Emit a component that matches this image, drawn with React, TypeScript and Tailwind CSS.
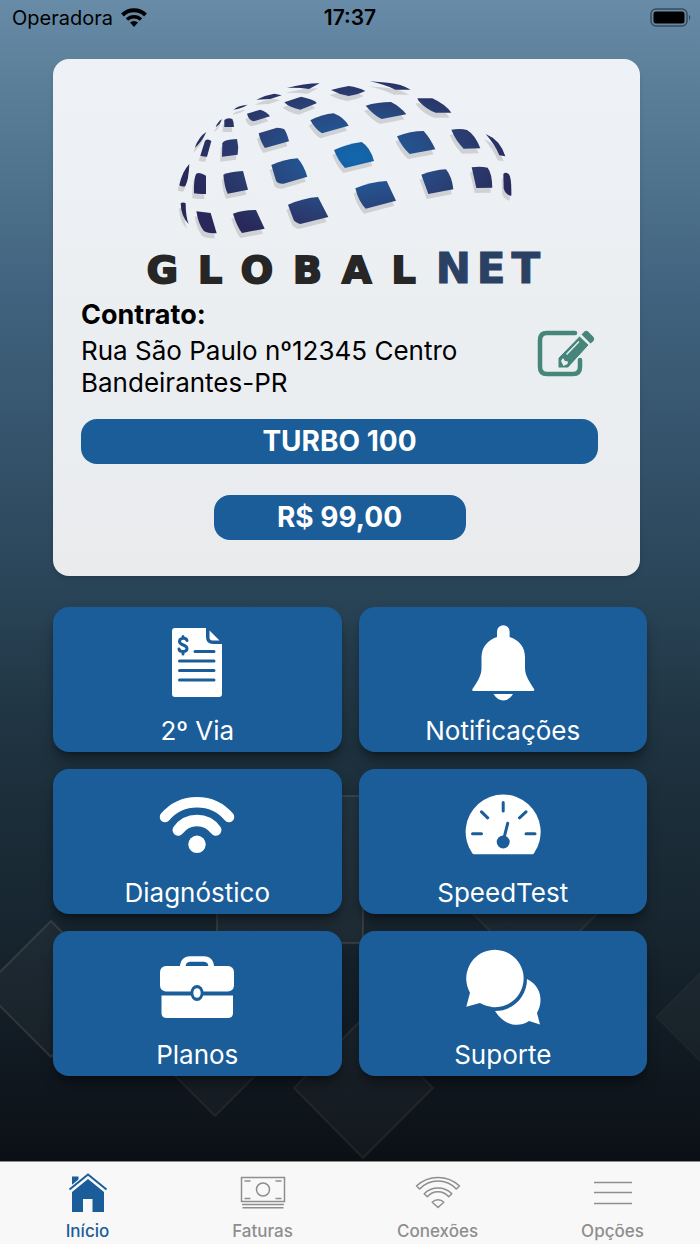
import React from 'react';

const globeTiles = [
  'M440 84 Q490 70 538 70 L506 87 Q470 82 440 84Z',
  'M348 119 Q375 105 402 101 L424 106 L390 117Z',
  'M280 149 Q290 137 322 134 L310 141 Q295 147 280 149Z',
  'M688 64 Q750 68 780 75 Q800 82 811 89 L765 89 Q730 72 688 64Z',
  'M572 90 Q600 82 625 78 Q655 82 675 93 Q655 103 625 108 Q598 104 572 90Z',
  'M432 127 L482 110 Q515 117 526 125 L529 130 L480 149 Q445 142 432 127Z',
  'M320 161 L360 149 Q380 155 389 169 L340 184 Q325 180 320 161Z',
  'M252 180 Q262 172 276 177 Q281 185 281 201 L252 201Z',
  'M226 202 Q232 185 245 178 L238 192Z',
  'M163 264 Q175 230 198 216 Q185 245 163 264Z',
  'M180 287 L194 242 Q203 234 213 243 L200 290 Q190 290 180 287Z',
  'M246 250 Q250 238 290 237 Q296 260 292 284 L245 290Z',
  'M355 220 L410 203 Q425 203 432 208 Q440 220 446 244 L374 264 Q360 245 355 220Z',
  'M510 181 Q545 163 580 160 Q610 172 625 197 L545 220 Q525 208 510 181Z',
  'M676 137 Q710 126 752 126 Q780 140 798 163 L724 177 Q700 165 676 137Z',
  'M831 115 L876 115 Q915 133 933 158 L886 158 Q860 150 835 123Z',
  'M581 270 Q620 252 664 246 Q690 262 701 303 L614 324 Q595 305 581 270Z',
  'M770 229 Q810 213 850 213 Q870 235 885 268 L808 282 Q785 262 770 229Z',
  'M933 209 Q960 204 980 210 Q1005 225 1020 265 L970 266 Q945 240 933 209Z',
  'M1036 222 Q1080 240 1095 289 L1077 286 Q1065 255 1036 222Z',
  'M393 315 Q430 298 472 295 Q490 315 501 350 L430 371 Q412 372 407 362Z',
  'M249 344 Q270 335 308 333 L323 389 L262 401 Q252 380 249 344Z',
  'M161 400 Q160 350 168 341 Q178 335 197 347 L197 402 Q175 403 161 400Z',
  'M117 376 Q125 335 147 312 Q145 360 135 378 Q128 382 117 376Z',
  'M121 430 Q128 425 136 430 Q136 470 145 492 Q122 470 121 430Z',
  'M168 454 L211 459 L229 520 Q200 520 190 512 Q175 495 168 454Z',
  'M278 461 Q310 449 347 450 L373 506 L305 519 Q290 500 278 461Z',
  'M443 434 Q490 414 533 411 L564 471 L480 492 Q465 488 460 480Z',
  'M645 385 Q690 365 739 363 L767 422 L676 446 Q655 425 645 385Z',
  'M843 344 Q880 330 917 328 Q935 350 939 388 L864 402Z',
  'M994 322 Q1020 318 1042 323 Q1055 340 1056 383 L1008 384Z',
  'M1089 342 Q1095 335 1105 342 Q1114 350 1113 407 Q1095 405 1090 385Z',
];

const Logo: React.FC = () => (
  <div className="flex flex-col items-center">
    <svg className="h-40 w-[340px]" viewBox="110 60 1020 480" aria-hidden="true">
      <defs>
        <radialGradient
          id="globe"
          gradientUnits="userSpaceOnUse"
          cx="0"
          cy="0"
          r="1"
          gradientTransform="translate(640 290) scale(500 270)"
        >
          <stop offset="0" stopColor="#1268ad" />
          <stop offset="0.15" stopColor="#165fa3" />
          <stop offset="0.4" stopColor="#264f8a" />
          <stop offset="0.7" stopColor="#2a3c70" />
          <stop offset="1" stopColor="#28295a" />
        </radialGradient>
      </defs>
      <g fill="#cfd1d4" transform="translate(-5 15)">
        {globeTiles.map((d) => (
          <path key={d} d={d} />
        ))}
      </g>
      <g fill="url(#globe)">
        {globeTiles.map((d) => (
          <path key={d} d={d} />
        ))}
      </g>
    </svg>
    <h1 className="mt-[5px] flex items-baseline font-['DejaVu_Sans',sans-serif] leading-[48px] font-bold">
      <span className="text-[38px] tracking-[20px] text-[#262626] [-webkit-text-stroke:2px_#262626]">
        GLOBAL
      </span>
      <span className="text-[42px] tracking-[6px] text-[#2b4163] [-webkit-text-stroke:1px_#2b4163]">
        NET
      </span>
    </h1>
  </div>
);

const InvoiceIcon: React.FC = () => (
  <svg className="size-[92px]" viewBox="0 0 92 92" aria-hidden="true">
    <path fill="currentColor" d="M24 12H55v9q0 7 7 7h9v50q0 3-3 3H24q-3 0-3-3V15q0-3 3-3z" />
    <path fill="currentColor" d="M58.500 14.500L68.500 24.500h-7q-3 0-3-3z" />
    <g fill="none" stroke="#1a5d99" strokeWidth="3" strokeLinecap="round">
      <path d="M44 35.500H63M28.500 45H63M28.500 54.500H63M28.500 64H63" />
      <path d="M36 24.500C35 21.500 28.500 21.500 28.500 25.500S36 28.500 36 32.500S28.500 36.500 28 33M32 20.500V22M32 36.500V38" />
    </g>
  </svg>
);

const BellIcon: React.FC = () => (
  <svg className="size-[92px]" viewBox="0 0 92 92" fill="currentColor" aria-hidden="true">
    <path d="M40 21V15.500a6.300 6.300 0 0 1 12.600 0V21C62 24 68 31 68 41V52C68 60 73 66 77 73Q78 75 76 75H16.500Q14.500 75 15.500 73C20 66 24.500 60 24.500 52V41C24.500 31 31 24 40 21Z" />
    <path d="M36.500 78H56Q52 84.500 46.300 84.500T36.500 78Z" />
  </svg>
);

const WifiIcon: React.FC = () => (
  <svg className="size-[92px]" viewBox="0 0 92 92" aria-hidden="true">
    <g fill="none" stroke="currentColor" strokeLinecap="round">
      <path strokeWidth="10.500" d="M14 39A42 42 0 0 1 78 39" />
      <path strokeWidth="11.500" d="M27.300 52A23 23 0 0 1 64.700 52" />
    </g>
    <circle cx="46" cy="66.300" r="8.700" fill="currentColor" />
  </svg>
);

const SpeedIcon: React.FC = () => (
  <svg className="size-[92px]" viewBox="0 0 92 92" aria-hidden="true">
    <path fill="currentColor" d="M17 76.300Q16 76.300 15.300 75.300A37.500 37.500 0 1 1 77 75.300Q76.400 76.300 75.500 76.300Z" />
    <g fill="none" stroke="#1a5d99" strokeWidth="3" strokeLinecap="round">
      <path d="M46.200 24.500V33M15.500 55.700H24.500M69 55.700H78M24.500 33.800L30.700 39.800M69 33.800L62.500 39.800" />
      <path d="M50.700 45.300L46.500 62" />
    </g>
    <circle cx="46.200" cy="64" r="6.500" fill="#1a5d99" />
  </svg>
);

const BriefcaseIcon: React.FC = () => (
  <svg className="size-[92px]" viewBox="0 0 92 92" aria-hidden="true">
    <path
      d="M31.500 28Q32 19 39 19H53Q60 19 60.500 28"
      fill="none"
      stroke="currentColor"
      strokeWidth="5.500"
    />
    <rect x="9" y="26" width="74" height="25.500" rx="6" fill="currentColor" />
    <path fill="currentColor" d="M10.500 55.500H82V73Q82 78 77 78H15.500Q10.500 78 10.500 73Z" />
    <ellipse cx="46" cy="53" rx="6.500" ry="8" fill="#1a5d99" />
    <ellipse cx="46" cy="53" rx="3.700" ry="4.800" fill="currentColor" />
  </svg>
);

const ChatIcon: React.FC = () => (
  <svg className="size-[92px]" viewBox="0 0 92 92" fill="currentColor" aria-hidden="true">
    <path d="M13 52.700A28.700 28.700 0 1 1 23 63L9.300 66.700Z" />
    <path d="M70 39C80 44 83.500 52 83.500 60C83.500 65 82 69 80 73L83 84.500L72 81C60 89 46 84 38 71C56 71 70 57 70 39Z" />
  </svg>
);

const EditIcon: React.FC = () => (
  <svg className="h-12 w-[60px]" viewBox="0 0 60 48" aria-hidden="true">
    <path
      d="M39 4H11Q4 4 4 11V38Q4 45 11 45H37Q44 45 44 38V31"
      fill="none"
      stroke="#45857a"
      strokeWidth="4.500"
      strokeLinecap="round"
    />
    <path d="M22 39V29L43.500 7L53 16L32 39Z" fill="#45857a" stroke="#ebeef1" strokeWidth="1" />
    <path d="M45.500 5.500L48.500 2.500Q50.500 1 52.500 3L57.500 8Q59 10 57.500 12L54.500 14.500Z" fill="#45857a" />
    <path d="M25 32L27 29L29 32L32 32.500L31.500 35L27.500 37Z" fill="#ebeef1" />
    <path d="M30.500 25.500L43 12.500" stroke="#ebeef1" strokeWidth="1.500" />
  </svg>
);

const HomeTabIcon: React.FC = () => (
  <svg className="h-11 w-12" viewBox="0 0 48 44" aria-hidden="true">
    <path fill="currentColor" d="M8 6.500H14.500V12L8 18Z" />
    <path fill="none" stroke="#f8f8f8" strokeWidth="5" d="M5 20.500L24 5L43 20.500" />
    <path fill="none" stroke="currentColor" strokeWidth="2" d="M5.500 19.500L24 4.500L42.500 19.500" />
    <path fill="currentColor" d="M24 9L40 22V42H28.500V29H19V42H8V22Z" />
  </svg>
);

const CashTabIcon: React.FC = () => (
  <svg
    className="h-11 w-12"
    viewBox="0 0 48 44"
    fill="none"
    stroke="currentColor"
    strokeWidth="1.500"
    aria-hidden="true"
  >
    <path d="M2.500 7.500H45.500V31.500H2.500Z" />
    <circle cx="24" cy="19.500" r="6.500" />
    <path d="M5.500 11H11.500M36.500 11H42.500M5.500 28.500H11.500M36.500 28.500H42.500M3 34.500H45M3.500 37.700H44.500" />
  </svg>
);

const WifiTabIcon: React.FC = () => (
  <svg
    className="h-11 w-12"
    viewBox="0 0 48 44"
    fill="none"
    stroke="currentColor"
    strokeWidth="1.500"
    strokeLinejoin="round"
    aria-hidden="true"
  >
    <path d="M2.500 16A31.400 31.400 0 0 1 45.500 16L42.300 19A25 25 0 0 0 5.700 19Z" />
    <path d="M10.200 23.700A19.500 19.500 0 0 1 37.800 23.700L34.700 26.700A14 14 0 0 0 13.300 26.700Z" />
    <path d="M18.200 32.300A8 8 0 0 1 29.800 32.300L24 37.500Z" />
  </svg>
);

const MenuTabIcon: React.FC = () => (
  <svg className="h-11 w-12" viewBox="0 0 48 44" stroke="currentColor" strokeWidth="1.500" aria-hidden="true">
    <path d="M5 12.500H43M5 22.500H43M5 33.500H43" />
  </svg>
);

const StatusBar: React.FC = () => (
  <header className="grid h-9 grid-cols-3 items-center px-3 text-[20px] leading-6 text-black">
    <div className="flex items-center gap-2">
      <span>Operadora</span>
      <svg className="h-5 w-[26px]" viewBox="0 0 26 20" aria-hidden="true">
        <g fill="none" stroke="currentColor" strokeWidth="4">
          <path d="M1.500 7A16.500 16.500 0 0 1 24.500 7" />
          <path d="M6 11.500A10 10 0 0 1 20 11.500" strokeWidth="3.500" />
        </g>
        <path fill="currentColor" d="M9 14.500A6 6 0 0 1 17 14.500L13 19Z" />
      </svg>
    </div>
    <span className="text-center text-[21px] font-semibold">17:37</span>
    <svg className="-mr-1 h-5 w-[42px] justify-self-end" viewBox="0 0 42 20" aria-hidden="true">
      <rect x="1" y="1" width="36" height="17" rx="5" fill="none" stroke="#000" strokeOpacity="0.450" strokeWidth="1.500" />
      <rect x="3.500" y="3.500" width="31" height="12" rx="2.500" />
      <path d="M39 6.500Q41.500 9.500 39 12.500Z" fillOpacity="0.500" />
    </svg>
  </header>
);

const Backdrop: React.FC = () => (
  <svg
    className="absolute inset-0 -z-10 h-full w-full"
    viewBox="0 0 700 1244"
    preserveAspectRatio="xMidYMax slice"
    fill="#ffffff"
    fillOpacity="0.030"
    stroke="#a08c82"
    strokeOpacity="0.200"
    strokeWidth="2"
    aria-hidden="true"
  >
    <path d="M217 796H363V943H217Z" />
    <path d="M51 921L-17 989L51 1057L119 989Z" />
    <path d="M535 852L597 914L535 976L473 914Z" strokeOpacity="0.120" />
    <path d="M215 1000L273 1058L215 1116L157 1058Z" strokeOpacity="0.120" />
    <path d="M363 1018L433 1088L363 1158L294 1088Z" strokeOpacity="0.120" />
    <path d="M728 945L800 1017L728 1089L656 1017Z" strokeOpacity="0.050" />
  </svg>
);

const services = [
  { label: '2º Via', icon: <InvoiceIcon /> },
  { label: 'Notificações', icon: <BellIcon /> },
  { label: 'Diagnóstico', icon: <WifiIcon /> },
  { label: 'SpeedTest', icon: <SpeedIcon /> },
  { label: 'Planos', icon: <BriefcaseIcon /> },
  { label: 'Suporte', icon: <ChatIcon /> },
];

const tabs = [
  { label: 'Início', href: '#inicio', icon: <HomeTabIcon />, active: true },
  { label: 'Faturas', href: '#faturas', icon: <CashTabIcon />, active: false },
  { label: 'Conexões', href: '#conexoes', icon: <WifiTabIcon />, active: false },
  { label: 'Opções', href: '#opcoes', icon: <MenuTabIcon />, active: false },
];

const App: React.FC = () => {
  return (
    <div className="relative isolate flex min-h-screen flex-col overflow-hidden bg-linear-[180deg,#688ca8_0%,#5c809a_6%,#40627e_24%,#2b465a_46%,#1e323f_60%,#17252f_75%,#0f161d_88%,#0a0f14_94%] font-[Inter,sans-serif]">
      <Backdrop />
      <StatusBar />

      <main className="flex-1 px-[53px] pt-[23px] pb-[83px]">
        {/* Contract card */}
        <section className="mr-[7px] rounded-2xl bg-linear-to-b from-[#eef2f6] to-[#e9ebed] px-7 pt-[21px] pb-9 shadow-md">
          <Logo />

          <div className="mt-[5px] flex items-center justify-between">
            <div className="text-[26px] leading-8 text-black">
              <h2 className="mb-1 text-[27px] leading-8 font-bold">Contrato:</h2>
              <p className="max-w-[400px]">Rua São Paulo nº12345 Centro Bandeirantes-PR</p>
            </div>
            <button type="button" aria-label="Editar contrato" className="mt-2 mr-4">
              <EditIcon />
            </button>
          </div>

          <div className="mt-5 mr-[14px] flex flex-col items-center gap-[31px] text-center text-[28px] leading-[45px] font-bold text-white">
            <p className="w-full rounded-2xl bg-[#1a5d99]">TURBO 100</p>
            <p className="w-[252px] rounded-2xl bg-[#1a5d99]">R$ 99,00</p>
          </div>
        </section>

        {/* Service shortcuts */}
        <div className="mt-[31px] grid grid-cols-2 gap-[17px]">
          {services.map((item) => (
            <button
              key={item.label}
              type="button"
              className="flex h-[145px] flex-col items-center rounded-2xl bg-[#1a5d99] pt-[9px] text-white shadow-lg shadow-black/40"
            >
              {item.icon}
              <span className="mt-[7px] text-[26px] leading-8">{item.label}</span>
            </button>
          ))}
        </div>
      </main>

      <nav className="grid grid-cols-4 border-t border-[#8c8c8e] bg-[#f8f8f8] pt-2 pb-[3px]">
        {tabs.map((tab) => (
          <a
            key={tab.label}
            href={tab.href}
            className={`flex flex-col items-center gap-[7px] text-[17px] leading-5 font-medium ${
              tab.active ? 'text-[#1a5d99]' : 'text-[#8e8e8e]'
            }`}
          >
            {tab.icon}
            {tab.label}
          </a>
        ))}
      </nav>
    </div>
  );
};

export default App;
